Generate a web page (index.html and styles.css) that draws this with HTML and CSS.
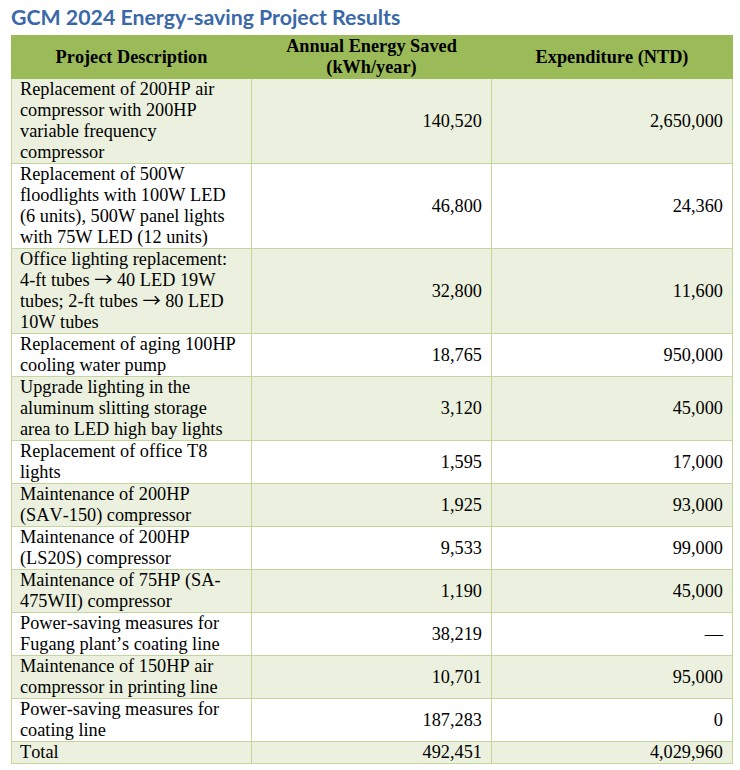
FILE: index.html
```html
<!DOCTYPE html>
<html>
<head>
<meta charset="utf-8">
<link rel="stylesheet" href="styles.css">
</head>
<body>
<div class="page">
  <h1 class="title">GCM 2024 Energy-saving Project Results</h1>
  <table class="results">
    <colgroup>
      <col class="c1"><col class="c2"><col class="c3">
    </colgroup>
    <thead>
      <tr>
        <th>Project Description</th>
        <th>Annual Energy Saved<br>(kWh/year)</th>
        <th>Expenditure (NTD)</th>
      </tr>
    </thead>
    <tbody>
      <tr class="alt">
        <td>Replacement of 200HP air compressor with 200HP variable frequency compressor</td>
        <td class="num">140,520</td>
        <td class="num">2,650,000</td>
      </tr>
      <tr>
        <td>Replacement of 500W floodlights with 100W LED (6 units), 500W panel lights with 75W LED (12 units)</td>
        <td class="num">46,800</td>
        <td class="num">24,360</td>
      </tr>
      <tr class="alt">
        <td>Office lighting replacement: 4-ft tubes <span class="arrow">→</span> 40 LED 19W tubes; 2-ft tubes <span class="arrow">→</span> 80 LED 10W tubes</td>
        <td class="num">32,800</td>
        <td class="num">11,600</td>
      </tr>
      <tr>
        <td>Replacement of aging 100HP cooling water pump</td>
        <td class="num">18,765</td>
        <td class="num">950,000</td>
      </tr>
      <tr class="alt">
        <td>Upgrade lighting in the aluminum slitting storage area to LED high bay lights</td>
        <td class="num">3,120</td>
        <td class="num">45,000</td>
      </tr>
      <tr>
        <td>Replacement of office T8 lights</td>
        <td class="num">1,595</td>
        <td class="num">17,000</td>
      </tr>
      <tr class="alt">
        <td>Maintenance of 200HP (SAV-150) compressor</td>
        <td class="num">1,925</td>
        <td class="num">93,000</td>
      </tr>
      <tr>
        <td>Maintenance of 200HP (LS20S) compressor</td>
        <td class="num">9,533</td>
        <td class="num">99,000</td>
      </tr>
      <tr class="alt">
        <td>Maintenance of 75HP (SA-475WII) compressor</td>
        <td class="num">1,190</td>
        <td class="num">45,000</td>
      </tr>
      <tr>
        <td>Power-saving measures for Fugang plant’s coating line</td>
        <td class="num">38,219</td>
        <td class="num">—</td>
      </tr>
      <tr class="alt">
        <td>Maintenance of 150HP air compressor in printing line</td>
        <td class="num">10,701</td>
        <td class="num">95,000</td>
      </tr>
      <tr>
        <td>Power-saving measures for coating line</td>
        <td class="num">187,283</td>
        <td class="num">0</td>
      </tr>
      <tr class="alt">
        <td>Total</td>
        <td class="num">492,451</td>
        <td class="num">4,029,960</td>
      </tr>
    </tbody>
  </table>
</div>
</body>
</html>
```

FILE: styles.css
```css
html, body {
  margin: 0;
  padding: 0;
  background: #ffffff;
}

.page {
  padding: 4px 0 0 11px;
}

.title {
  margin: 0 0 5px 0;
  font-family: "Lato", "Open Sans", sans-serif;
  font-weight: 700;
  font-size: 21.3px;
  line-height: 26px;
  color: #3a68a8;
}

.results {
  width: 721px;
  table-layout: fixed;
  border-collapse: collapse;
  font-family: "Liberation Serif", "Times New Roman", serif;
  font-size: 18.3px;
  line-height: 21px;
  color: #000000;
  font-variant-ligatures: none;
  font-kerning: none;
}

.c1 { width: 240px; }
.c2 { width: 240px; }
.c3 { width: 241px; }

.results th {
  background: #9bbb59;
  border: 1px solid #9bbb59;
  padding: 0 6px;
  font-weight: 700;
  text-align: center;
  vertical-align: middle;
}

.results td {
  border: 1px solid #c3d69b;
  padding: 0 9px 0 8px;
  vertical-align: middle;
  text-align: left;
}

.results td:first-child {
  padding-right: 12px;
}

.results td.num {
  text-align: right;
}

.results tr.alt td {
  background: #ebf1de;
}

.arrow {
  font-family: "Noto Sans CJK JP", sans-serif;
  font-size: 18.3px;
  line-height: 0;
}
```
